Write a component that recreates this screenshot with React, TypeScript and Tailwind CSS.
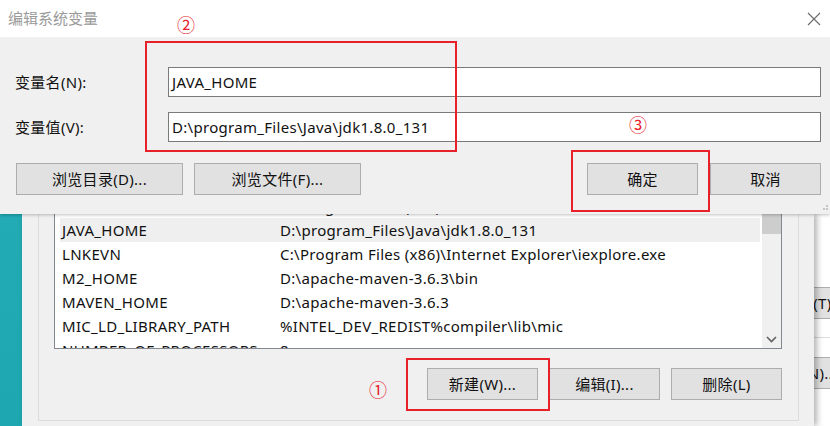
import React from "react";

const FONT = "font-['Noto_Sans','Noto_Sans_CJK_SC',sans-serif] tracking-[0.3px]";

const rows: [string, string][] = [
  ["INTEL_DEV_REDIST", "C:\\Program Files (x86)\\Common Files\\Intel\\Shared Libraries\\"],
  ["JAVA_HOME", "D:\\program_Files\\Java\\jdk1.8.0_131"],
  ["LNKEVN", "C:\\Program Files (x86)\\Internet Explorer\\iexplore.exe"],
  ["M2_HOME", "D:\\apache-maven-3.6.3\\bin"],
  ["MAVEN_HOME", "D:\\apache-maven-3.6.3"],
  ["MIC_LD_LIBRARY_PATH", "%INTEL_DEV_REDIST%compiler\\lib\\mic"],
  ["NUMBER_OF_PROCESSORS", "8"],
];

function Btn({ label, className = "" }: { label: string; className?: string }) {
  return (
    <div
      className={`flex h-[32px] items-center justify-center border border-[#adadad] bg-[#e1e1e1] text-[15px] text-[#111] ${className}`}
    >
      {label}
    </div>
  );
}

function CloseIcon() {
  return (
    <svg width="14" height="14" viewBox="0 0 14 14" className="mr-[9px]">
      <path d="M1 1 L13 13 M13 1 L1 13" stroke="#6b6b6b" strokeWidth="1.1" fill="none" />
    </svg>
  );
}

function EditDialog() {
  return (
    <div className="relative z-20 h-[214px] bg-[#f0f0f0] shadow-[0_1px_3px_rgba(0,0,0,0.25)]">
      {/* title bar */}
      <div className="flex h-[37px] items-center justify-between bg-white pl-[8px]">
        <span className="text-[15px] tracking-normal text-[#9a9a9a]">编辑系统变量</span>
        <CloseIcon />
      </div>

      {/* fields */}
      <div className="pt-[30px]">
        <div className="flex items-center">
          <span className="w-[168px] pl-[15px] text-[15px] text-[#111]">变量名(N):</span>
          <div className="flex h-[30px] w-[653px] items-center border border-[#7a7a7a] bg-white pl-[3px] text-[15px] text-[#111]">
            JAVA_HOME
          </div>
        </div>
        <div className="mt-[15px] flex items-center">
          <span className="w-[168px] pl-[15px] text-[15px] text-[#111]">变量值(V):</span>
          <div className="flex h-[30px] w-[653px] items-center border border-[#7a7a7a] bg-white pl-[3px] text-[15px] text-[#111]">
            D:\program_Files\Java\jdk1.8.0_131
          </div>
        </div>
      </div>

      {/* buttons */}
      <div className="mt-[21px] flex pl-[16px]">
        <Btn label="浏览目录(D)..." className="w-[167px]" />
        <Btn label="浏览文件(F)..." className="ml-[11px] w-[167px]" />
        <Btn label="确定" className="ml-[226px] w-[111px]" />
        <Btn label="取消" className="ml-[12px] w-[111px]" />
      </div>

      {/* size grip */}
      <svg width="8" height="8" viewBox="0 0 8 8" className="absolute bottom-[1px] right-[1px]">
        <rect x="5" y="0" width="2" height="2" fill="#c4c4c4" />
        <rect x="2" y="3" width="2" height="2" fill="#c4c4c4" />
        <rect x="5" y="3" width="2" height="2" fill="#c4c4c4" />
      </svg>
    </div>
  );
}

function VarList() {
  return (
    <div className="flex h-[135px] w-[728px] border-x border-b border-[#828790] bg-white">
      <div className="h-full flex-1 overflow-hidden pl-[5px]">
        <div className="-mt-[20px] w-[700px]">
          {rows.map(([name, value]) => (
            <div
              key={name}
              className={`flex h-[24px] items-center pl-[2px] text-[15px] text-[#111] ${
                name === "JAVA_HOME" ? "bg-[#efefef]" : ""
              }`}
            >
              <span className="w-[218px] shrink-0 whitespace-nowrap">{name}</span>
              <span className="whitespace-nowrap">{value}</span>
            </div>
          ))}
        </div>
      </div>
      {/* scrollbar */}
      <div className="ml-[2px] flex w-[19px] flex-col justify-between bg-[#f0f0f0]">
        <div className="h-[20px] bg-[#cdcdcd]" />
        <svg width="19" height="18" viewBox="0 0 19 18">
          <path d="M5 7 L9.5 11.5 L14 7" stroke="#606060" strokeWidth="1.6" fill="none" />
        </svg>
      </div>
    </div>
  );
}

function Background() {
  return (
    <div className="flex h-[212px]">
      {/* desktop */}
      <div className="w-[22px] bg-[linear-gradient(180deg,#22abb4,#1ea7b0)]" />

      {/* environment variables window */}
      <div className="relative z-10 w-[792px] bg-[#f0f0f0] pl-[16px] shadow-[3px_0_6px_rgba(0,0,0,0.3)]">
        <div className="h-[207px] w-[761px] border-x border-b border-[#dcdcdc] pl-[15px]">
          <VarList />
          <div className="mt-[19px] flex w-[728px] justify-end gap-[11px]">
            <Btn label="新建(W)..." className="w-[111px]" />
            <Btn label="编辑(I)..." className="w-[111px]" />
            <Btn label="删除(L)" className="w-[111px]" />
          </div>
        </div>
      </div>

      {/* system properties window behind */}
      <div className="w-[16px] overflow-hidden bg-white">
        <div className="mt-[73px] -ml-[56px] w-[111px]">
          <Btn label="设置(T)..." className="w-[111px]" />
        </div>
        <div className="mt-[18px] h-px w-full bg-[#dcdcdc]" />
        <div className="mt-[19px] -ml-[80px] w-[111px]">
          <Btn label="环境变量(N)..." className="w-[111px]" />
        </div>
      </div>
    </div>
  );
}

export default function App() {
  return (
    <div className={`relative h-[426px] w-[830px] overflow-hidden bg-[#f0f0f0] ${FONT}`}>
      <EditDialog />
      <Background />

      {/* annotations */}
      <div className="pointer-events-none absolute left-[145px] top-[41px] z-30 h-[111px] w-[312px] border-2 border-[#e8202a]" />
      <div className="pointer-events-none absolute left-[571px] top-[150px] z-30 h-[62px] w-[139px] border-2 border-[#e8202a]" />
      <div className="pointer-events-none absolute left-[406px] top-[358px] z-30 h-[53px] w-[144px] border-2 border-[#e8202a]" />
      <span className="absolute left-[177px] top-[14px] z-30 text-[18px] leading-[22px] text-[#e8202a]">②</span>
      <span className="absolute left-[629px] top-[114px] z-30 text-[18px] leading-[22px] text-[#e8202a]">③</span>
      <span className="absolute left-[369px] top-[379px] z-30 text-[18px] leading-[22px] text-[#e8202a]">①</span>
    </div>
  );
}
